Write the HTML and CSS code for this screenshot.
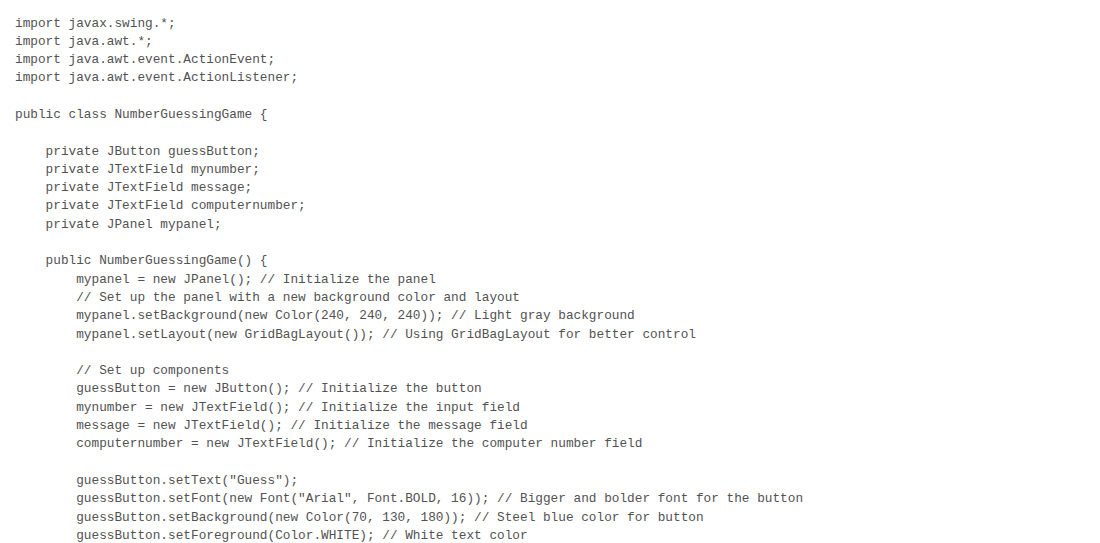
FILE: index.html
```html
<!DOCTYPE html>
<html lang="en">
<head>
<meta charset="utf-8">
<title>NumberGuessingGame.java</title>
<link rel="stylesheet" href="styles.css">
</head>
<body>
<main class="page">
<pre class="code"><code class="code-text">import javax.swing.*;
import java.awt.*;
import java.awt.event.ActionEvent;
import java.awt.event.ActionListener;

public class NumberGuessingGame {

    private JButton guessButton;
    private JTextField mynumber;
    private JTextField message;
    private JTextField computernumber;
    private JPanel mypanel;

    public NumberGuessingGame() {
        mypanel = new JPanel(); // Initialize the panel
        // Set up the panel with a new background color and layout
        mypanel.setBackground(new Color(240, 240, 240)); // Light gray background
        mypanel.setLayout(new GridBagLayout()); // Using GridBagLayout for better control

        // Set up components
        guessButton = new JButton(); // Initialize the button
        mynumber = new JTextField(); // Initialize the input field
        message = new JTextField(); // Initialize the message field
        computernumber = new JTextField(); // Initialize the computer number field

        guessButton.setText("Guess");
        guessButton.setFont(new Font("Arial", Font.BOLD, 16)); // Bigger and bolder font for the button
        guessButton.setBackground(new Color(70, 130, 180)); // Steel blue color for button
        guessButton.setForeground(Color.WHITE); // White text color</code></pre>
</main>
</body>
</html>
```

FILE: styles.css
```css
html, body {
  margin: 0;
  padding: 0;
  background: #ffffff;
}

.page {
  padding: 14.5px 0 0 15px;
  overflow: hidden;
  height: 528px;
}

.code {
  margin: 0;
  font-family: "Liberation Mono", "Courier New", monospace;
  font-size: 12.75px;
  line-height: 18.29px;
  color: #525252;
  white-space: pre;
}

.code-text {
  font-family: "Liberation Mono", "Courier New", monospace;
  font-size: 12.75px;
  line-height: 18.29px;
  color: #525252;
}
```
